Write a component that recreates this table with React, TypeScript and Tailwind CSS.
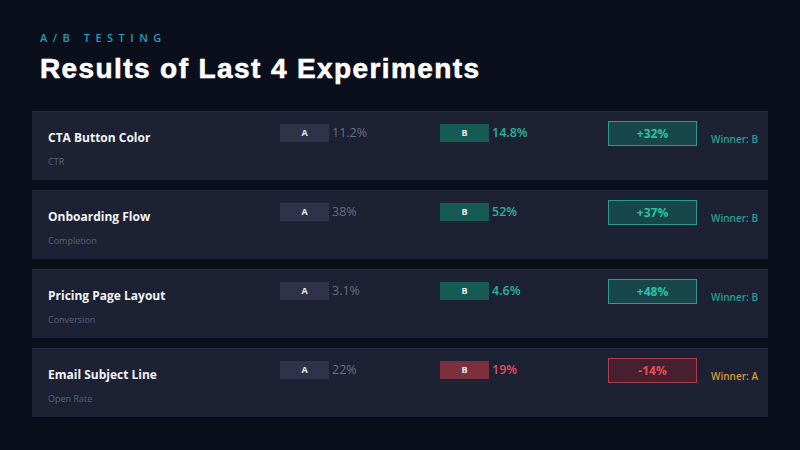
import React from "react";

type Row = {
  name: string;
  metric: string;
  a: string;
  b: string;
  delta: string;
  win: "A" | "B";
};

const rows: Row[] = [
  { name: "CTA Button Color", metric: "CTR", a: "11.2%", b: "14.8%", delta: "+32%", win: "B" },
  { name: "Onboarding Flow", metric: "Completion", a: "38%", b: "52%", delta: "+37%", win: "B" },
  { name: "Pricing Page Layout", metric: "Conversion", a: "3.1%", b: "4.6%", delta: "+48%", win: "B" },
  { name: "Email Subject Line", metric: "Open Rate", a: "22%", b: "19%", delta: "-14%", win: "A" },
];

export default function App() {
  return (
    <div
      className="w-[800px] h-[450px] bg-[#0b0e1b] overflow-hidden"
      style={{ fontFamily: '"Open Sans", "Noto Sans", sans-serif' }}
    >
      <div className="pl-10 pt-[31px]">
        <div className="text-[11px] leading-[14px] font-semibold tracking-[0.5em] text-[#1f9fc0]">
          A/B TESTING
        </div>
        <div
          className="mt-[7px] text-[28px] leading-[34px] font-bold text-white tracking-[1.4px] [-webkit-text-stroke:0.6px_white]"
          style={{ fontFamily: '"Liberation Sans", Arial, sans-serif' }}
        >
          Results of Last 4 Experiments
        </div>
      </div>
      <div className="mx-8 mt-[25px] flex flex-col gap-[10px]">
        {rows.map((r) => {
          const good = r.win === "B";
          return (
            <div
              key={r.name}
              className="h-[69px] flex items-start bg-[#1c2134] border-t border-[#232a42] pl-4"
            >
              <div className="w-[232px] pt-[17px]">
                <div className="text-[12px] leading-[17px] font-bold text-[#f2f4f8]">{r.name}</div>
                <div className="mt-[10px] text-[9px] leading-[12px] text-[#5c6378]">{r.metric}</div>
              </div>
              <div className="w-[160px] pt-[12px] flex items-center">
                <div className="w-[49px] h-[18px] bg-[#2e3349] flex items-center justify-center text-[9px] font-bold text-[#e8eaf0]">
                  A
                </div>
                <div className="ml-[3px] text-[12.5px] leading-[18px] text-[#686f85]">{r.a}</div>
              </div>
              <div className="w-[168px] pt-[12px] flex items-center">
                <div
                  className={
                    "w-[49px] h-[18px] flex items-center justify-center text-[9px] font-bold text-[#e8eaf0] " +
                    (good ? "bg-[#155a53]" : "bg-[#7c2f3c]")
                  }
                >
                  B
                </div>
                <div
                  className={
                    "ml-[3px] text-[12.5px] leading-[18px] font-semibold " +
                    (good ? "text-[#2bb3a0]" : "text-[#e2505a]")
                  }
                >
                  {r.b}
                </div>
              </div>
              <div className="pt-[9px]">
                <div
                  className={
                    "w-[89px] h-[25px] border flex items-center justify-center text-[12px] font-bold " +
                    (good
                      ? "bg-[#17474a] border-[#2a9d8c] text-[#2fc0a2]"
                      : "bg-[#46202f] border-[#b53b52] text-[#e5505a]")
                  }
                >
                  {r.delta}
                </div>
              </div>
              <div
                className={
                  "ml-[14px] pt-[21px] text-[10px] leading-[12px] font-semibold " +
                  (good ? "text-[#2a9f96]" : "text-[#d99a2b]")
                }
              >
                Winner: {r.win}
              </div>
            </div>
          );
        })}
      </div>
    </div>
  );
}
